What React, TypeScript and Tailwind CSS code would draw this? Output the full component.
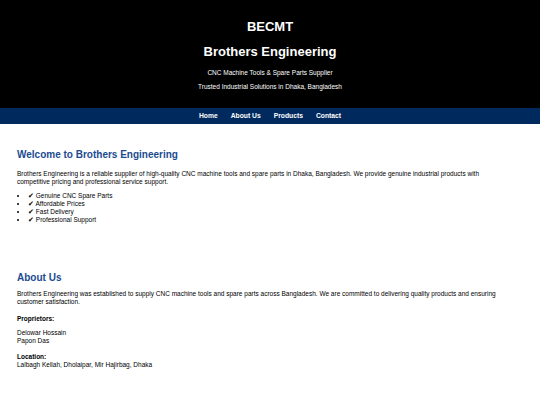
const features = [
  "Genuine CNC Spare Parts",
  "Affordable Prices",
  "Fast Delivery",
  "Professional Support",
];

const links = ["Home", "About Us", "Products", "Contact"];

export default function App() {
  return (
    <div className="min-h-[405px] bg-white text-black font-['Liberation_Sans',Arial,sans-serif]">
      {/* Header */}
      <header className="bg-black text-white text-center pt-[19px] pb-[17px]">
        <h1 className="text-[13px] leading-[16px] font-bold">BECMT</h1>
        <h2 className="mt-[9px] text-[13px] leading-[16px] font-bold">Brothers Engineering</h2>
        <p className="mt-[9px] text-[6.5px] leading-[8px]">CNC Machine Tools &amp; Spare Parts Supplier</p>
        <p className="mt-[6px] text-[6.5px] leading-[8px]">Trusted Industrial Solutions in Dhaka, Bangladesh</p>
      </header>

      {/* Nav */}
      <nav className="bg-[#002a5e] h-[16px] flex items-center justify-center gap-[13px]">
        {links.map((l) => (
          <a key={l} href="#" className="text-white font-bold text-[6.75px] leading-[8px]">
            {l}
          </a>
        ))}
      </nav>

      <main className="px-[17px]">
        <section className="pt-[25px]">
          <h2 className="text-[#1b4b91] font-bold text-[10px] leading-[12px]">Welcome to Brothers Engineering</h2>
          <p className="mt-[9px] text-[6.5px] leading-[8px] pr-[20px]">
            Brothers Engineering is a reliable supplier of high-quality CNC machine tools and spare parts in Dhaka,
            Bangladesh. We provide genuine industrial products with competitive pricing and professional service support.
          </p>
          <ul className="mt-[6px] pl-[11px] list-disc text-[6.5px] leading-[8px]">
            {features.map((f) => (
              <li key={f}>✔ {f}</li>
            ))}
          </ul>
        </section>

        <section className="pt-[48px]">
          <h2 className="text-[#1b4b91] font-bold text-[10px] leading-[12px]">About Us</h2>
          <p className="mt-[6px] text-[6.5px] leading-[8px] pr-[20px]">
            Brothers Engineering was established to supply CNC machine tools and spare parts across Bangladesh. We are
            committed to delivering quality products and ensuring customer satisfaction.
          </p>
          <p className="mt-[9px] text-[6.5px] leading-[8px] font-bold">Proprietors:</p>
          <p className="mt-[6px] text-[6.5px] leading-[8px]">
            Delowar Hossain
            <br />
            Papon Das
          </p>
          <p className="mt-[8px] text-[6.5px] leading-[8px]">
            <span className="font-bold">Location:</span>
            <br />
            Lalbagh Kellah, Dholaipar, Mir Hajirbag, Dhaka
          </p>
        </section>
      </main>
    </div>
  );
}
